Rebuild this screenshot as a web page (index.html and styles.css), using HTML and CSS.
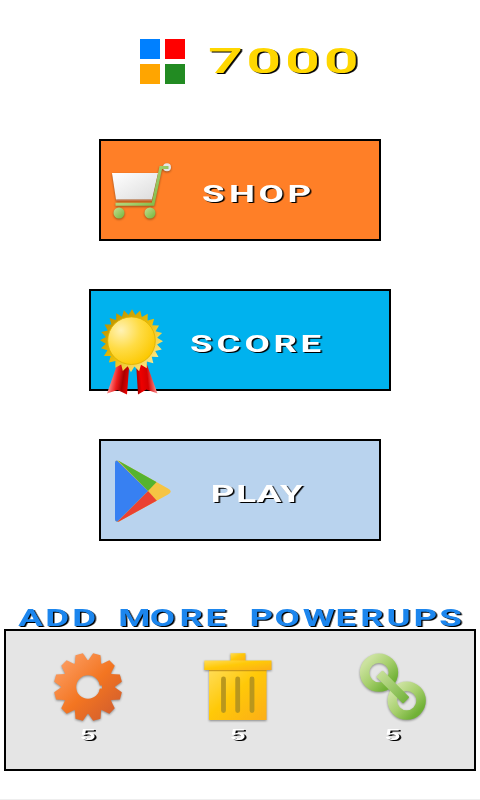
FILE: index.html
```html
<!DOCTYPE html>
<html lang="en">
<head>
<meta charset="utf-8">
<title>Menu</title>
<link rel="stylesheet" href="styles.css">
</head>
<body>
<main class="screen">
  <header class="balance">
    <div class="tiles"><i class="blue"></i><i class="red"></i><i class="orange"></i><i class="green"></i></div>
    <svg class="label gold" width="180" height="60" viewBox="200 30 180 60"><text transform="scale(1.75 1)" y="73" x="118.8 140.7 162.900 185">7000</text></svg>
  </header>

  <nav class="menu">
    <a class="card shop">
      <svg width="80" height="98" viewBox="101 141 80 98">
        <defs>
          <linearGradient id="basket" x2="1" y2="1"><stop stop-color="#fff"/><stop offset="1" stop-color="#dcdcdc"/></linearGradient>
          <linearGradient id="leaf" x2="1" y2="1"><stop stop-color="#c5df91"/><stop offset="1" stop-color="#72b43b"/></linearGradient>
          <linearGradient id="frame" gradientUnits="userSpaceOnUse" x1="116" y1="170" x2="165" y2="206"><stop stop-color="#c5df91"/><stop offset=".5" stop-color="#a9d070"/><stop offset="1" stop-color="#72b43b"/></linearGradient>
        </defs>
        <g class="soft">
          <path d="M112 173H158L152 199.500H116Z" fill="url(#basket)"/>
          <path d="M116 200.500H152" stroke="#cc7445" stroke-width="1"/>
          <circle cx="167" cy="167.300" r="4" fill="#e6e6e6"/>
          <path d="M168.500 167.500H160.800L153 204.200H115.500" fill="none" stroke="url(#frame)" stroke-width="3"/>
          <circle cx="119" cy="213" r="5.500" fill="url(#leaf)"/>
          <circle cx="150" cy="213" r="5.500" fill="url(#leaf)"/>
        </g>
      </svg>
      <svg class="label white" width="198" height="98" viewBox="181 141 198 98"><text transform="scale(1.5 1)" y="202" x="134.700 152.700 172.300 191.600">SHOP</text></svg>
    </a>

    <a class="card score">
      <svg width="80" height="98" viewBox="91 291 80 98">
        <defs>
          <polygon id="tri" points="0,-31.500 27.280,15.750 -27.280,15.750"/>
          <clipPath id="burst">
            <use href="#tri" transform="rotate(1)"/><use href="#tri" transform="rotate(16)"/><use href="#tri" transform="rotate(31)"/><use href="#tri" transform="rotate(46)"/><use href="#tri" transform="rotate(61)"/><use href="#tri" transform="rotate(76)"/><use href="#tri" transform="rotate(91)"/><use href="#tri" transform="rotate(106)"/>
          </clipPath>
          <linearGradient id="rim" x2="1" y2="1"><stop offset=".15" stop-color="#bd9300"/><stop offset=".5" stop-color="#e9bd08"/><stop offset=".9" stop-color="#ffef9d"/></linearGradient>
          <radialGradient id="coin" cx=".28" cy=".28" r=".8"><stop stop-color="#fff2b5"/><stop offset=".5" stop-color="#ffdc45"/><stop offset="1" stop-color="#fcc800"/></radialGradient>
          <linearGradient id="ribbonL" x1="0" y1=".2" x2="1" y2=".45"><stop offset=".1" stop-color="#ffb1b1"/><stop offset=".5" stop-color="#ef1d1d"/><stop offset=".75" stop-color="#a80000"/><stop offset="1" stop-color="#e90000"/></linearGradient>
          <linearGradient id="ribbonR" x1="0" y1=".35" x2="1" y2=".2"><stop stop-color="#a80000"/><stop offset=".2" stop-color="#e00"/><stop offset=".5" stop-color="#d50000"/><stop offset=".9" stop-color="#ff9c9c"/></linearGradient>
        </defs>
        <path d="M118 362L107 393.500L117.500 390L127 394.500L129.500 362Z" fill="url(#ribbonL)"/>
        <path d="M136 362L138 394.500L146.500 389.500L157.500 393.500L146 362Z" fill="url(#ribbonR)"/>
        <g transform="translate(131.500 340.700)">
          <g clip-path="url(#burst)"><rect x="-32" y="-32" width="64" height="64" fill="url(#rim)"/></g>
          <circle r="23.800" fill="url(#coin)" stroke="#dcae00" stroke-width=".8"/>
        </g>
      </svg>
      <svg class="label white" width="218" height="98" viewBox="171 291 218 98"><text transform="scale(1.5 1)" y="352" x="126.700 144.300 163 182.400 200.300">SCORE</text></svg>
    </a>

    <a class="card play">
      <svg width="80" height="98" viewBox="101 441 80 98">
        <defs><clipPath id="playShape"><path d="M115 463Q115 459.500 119 461L168 488.500Q173.500 491.500 168 494.500L119 521.500Q115 522.500 115 519Z"/></clipPath></defs>
        <g clip-path="url(#playShape)">
          <path d="M114 458H176V524H114Z" fill="#f6c443"/>
          <path d="M117.500 460L148 491L158 480.500L121 458Z" fill="#55b32f"/>
          <path d="M117 522L148 491L158 502L121 524Z" fill="#ea4132"/>
          <path d="M114 457.500L148 491L114 525Z" fill="#3780f2"/>
        </g>
      </svg>
      <svg class="label white" width="198" height="98" viewBox="181 441 198 98"><text transform="scale(1.5 1)" y="502" x="140.500 157.500 171.200 186.700">PLAY</text></svg>
    </a>
  </nav>

  <section class="powerups">
    <svg class="label azure" width="480" height="28" viewBox="0 601 480 28"><text transform="scale(1.5 1)" y="626" x="12.200 30.200 48.200 67 78.900 99.800 119.700 137 152 166.300 183 201.800 223.600 240.200 257.700 275.600 292.800">ADD MORE POWERUPS</text></svg>
    <div class="panel">
      <svg class="count" width="156" height="138" viewBox="6 631 156 138">
        <defs>
          <polygon id="tooth" points="-6.600,-26 -3.800,-34 3.800,-34 6.600,-26 6.600,26 3.800,34 -3.800,34 -6.600,26"/>
          <mask id="gearMask" maskUnits="userSpaceOnUse" x="-36" y="-36" width="72" height="72">
            <g fill="#fff"><circle r="27"/><use href="#tooth" transform="rotate(15)"/><use href="#tooth" transform="rotate(45)"/><use href="#tooth" transform="rotate(75)"/><use href="#tooth" transform="rotate(105)"/><use href="#tooth" transform="rotate(135)"/><use href="#tooth" transform="rotate(165)"/></g>
            <circle r="11.800"/><rect x="10" y="-1.500" width="4" height="3"/>
          </mask>
          <linearGradient id="ember" x2="1" y2="1"><stop offset=".15" stop-color="#fb9a5d"/><stop offset=".52" stop-color="#f37521"/><stop offset=".85" stop-color="#d6602c"/></linearGradient>
        </defs>
        <g class="soft"><g transform="translate(88 687)"><g mask="url(#gearMask)"><rect x="-36" y="-36" width="72" height="72" fill="url(#ember)"/></g></g></g>
        <text transform="scale(1.9 1)" x="41.800" y="740.500">5</text>
      </svg>
      <svg class="count" width="156" height="138" viewBox="162 631 156 138">
        <defs><linearGradient id="bin" x2="1" y2="1"><stop stop-color="#ffdc57"/><stop offset=".45" stop-color="#ffc908"/><stop offset="1" stop-color="#fcae17"/></linearGradient></defs>
        <g class="soft" fill="url(#bin)">
          <rect x="209" y="670" width="57.500" height="50"/>
          <rect x="230.500" y="653.200" width="15" height="8"/>
          <rect x="204.300" y="660.500" width="67.200" height="9.500"/>
        </g>
        <path d="M209 670.700H266.500" stroke="#bf8d16"/>
        <path d="M223.500 679V710.500M237.700 679V710.500M252 679V710.500" stroke="#b9971d" stroke-width="4.800" stroke-linecap="round"/>
        <text transform="scale(1.9 1)" x="120.800" y="740.500">5</text>
      </svg>
      <svg class="count" width="156" height="138" viewBox="318 631 156 138">
        <defs>
          <linearGradient id="link" x2="1" y2="1"><stop offset=".1" stop-color="#cbe29f"/><stop offset=".5" stop-color="#a6cf6c"/><stop offset=".9" stop-color="#70b136"/></linearGradient>
          <linearGradient id="bar" x2="1" y2="0"><stop stop-color="#c5df96"/><stop offset="1" stop-color="#75b43e"/></linearGradient>
        </defs>
        <g class="soft">
          <circle cx="379" cy="672.600" r="14.400" fill="none" stroke="url(#link)" stroke-width="9.500"/>
          <circle cx="406.700" cy="700.600" r="14.400" fill="none" stroke="url(#link)" stroke-width="9.500"/>
          <rect x="-19" y="-4.500" width="38" height="9" rx="1" fill="url(#bar)" transform="translate(392.800 687) rotate(45)"/>
        </g>
        <text transform="scale(1.9 1)" x="202.300" y="740.500">5</text>
      </svg>
    </div>
  </section>
  <footer class="edge"></footer>
</main>
</body>
</html>
```
FILE: styles.css
```css
* { box-sizing: border-box; }
body { margin: 0; background: #fff; font-family: Roboto, "Liberation Sans", sans-serif; }
svg { display: block; flex: none; overflow: visible; }
.screen { width: 480px; height: 800px; display: flex; flex-direction: column; overflow: hidden; }
.balance { height: 109px; flex: none; margin-top: 30px; display: flex; padding-left: 140px; gap: 15px; }
.tiles { display: grid; grid-template-columns: 20px 20px; grid-template-rows: 20px 20px; gap: 5px; margin-top: 9px; height: 45px; }
.blue { background: #0080ff; }
.red { background: #f00; }
.orange { background: #ffa500; }
.green { background: #228b22; }
.menu { display: flex; flex-direction: column; align-items: center; gap: 48px; }
.card { display: flex; width: 282px; height: 102px; border: 2px solid #000; }
.shop { background: #ff7f27; }
.score { width: 302px; background: #00b2ee; }
.play { background: #b9d3ee; }
.label text { font-weight: 700; font-size: 24.500px; filter: drop-shadow(1.500px 1.500px 0 #000); }
.label.gold text { font-size: 35px; font-weight: 600; fill: #ffd700; filter: drop-shadow(1.200px 1.500px 0 #000); }
.white text { fill: #fff; }
.azure text { fill: #1c86ee; }
.powerups { margin-top: 60px; }
.panel { display: flex; width: 472px; height: 142px; margin: 0 4px; border: 2px solid #000; background: #e5e5e5; }
.count text { font-size: 15px; font-weight: 500; fill: #fff; filter: drop-shadow(1px 1px 0 #000); }
.soft { filter: drop-shadow(.500px 1px .800px rgba(0, 0, 0, .4)); }
.edge { height: 1px; margin-top: 28px; background: #eee; }
```
